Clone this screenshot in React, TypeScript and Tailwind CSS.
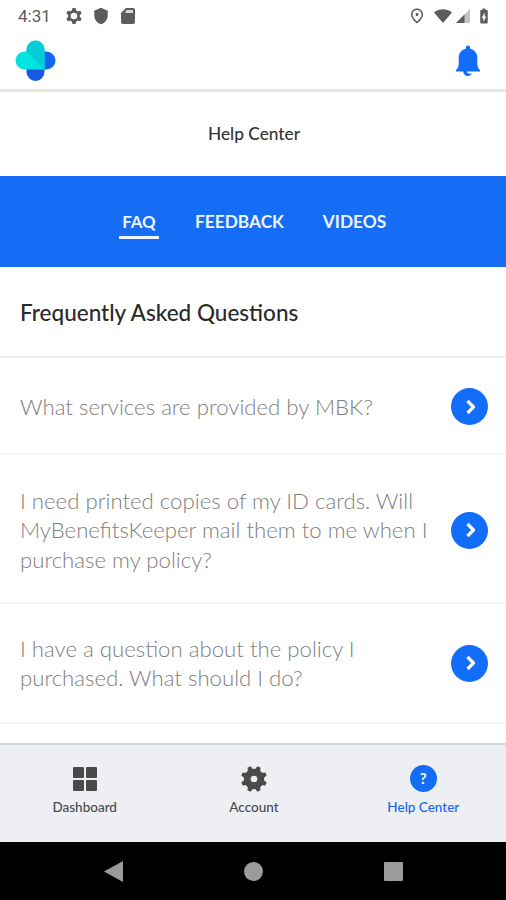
import { useState } from 'react'
import { MdBatteryChargingFull, MdOutlinePlace, MdShield } from 'react-icons/md'

interface Question {
  id: string
  lines: string[]
  rowClass: string
}

const questions: Question[] = [
  {
    id: 'services',
    lines: ['What services are provided by MBK?'],
    rowClass: 'h-[97px] pt-[2px]',
  },
  {
    id: 'id-cards',
    lines: [
      'I need printed copies of my ID cards. Will',
      'MyBenefitsKeeper mail them to me when I',
      'purchase my policy?',
    ],
    rowClass: 'h-[149px] pt-[3px]',
  },
  {
    id: 'policy',
    lines: ['I have a question about the policy I', 'purchased. What should I do?'],
    rowClass: 'h-[120px]',
  },
]

const tabs = [
  { id: 'faq', label: 'FAQ', width: 'w-[40px]', text: 'text-[16.8px]' },
  { id: 'feedback', label: 'FEEDBACK', width: 'w-[97px]', text: 'text-[17.3px]' },
  { id: 'videos', label: 'VIDEOS', width: 'w-[69px]', text: 'text-[17.3px]' },
]

const gearTeeth = [22.5, 67.5, 112.5, 157.5, 202.5, 247.5, 292.5, 337.5]
const settingsTeeth = [0, 60, 120, 180, 240, 300]

function SettingsIcon() {
  return (
    <svg viewBox="-9 -9 18 18" className="size-[18px]" fill="currentColor">
      <circle r="4.600" fill="none" stroke="currentColor" strokeWidth="2.600" />
      {settingsTeeth.map((angle) => (
        <path key={angle} d="M-2.400-5L-1.500-8H1.500L2.400-5z" transform={`rotate(${angle})`} />
      ))}
    </svg>
  )
}

function StatusBar() {
  return (
    <div className="flex h-8 items-center justify-between pl-[18px] pr-[13px] text-[#5c5c5c]">
      <div className="flex items-center">
        <span className="w-[47px] font-[Roboto,sans-serif] text-[17px] leading-none">4:31</span>
        <SettingsIcon />
        <MdShield className="ml-[9px] size-[18px]" />
        <svg viewBox="0 0 14 16" className="ml-[11px] h-4 w-[14px]" fill="currentColor">
          <path d="M5 0h7a2 2 0 0 1 2 2v12a2 2 0 0 1-2 2H2a2 2 0 0 1-2-2V5z" />
          <path d="M5.500 2H12v3H4z" fill="#d8d8d8" />
        </svg>
      </div>
      <div className="flex items-center">
        <MdOutlinePlace className="size-[18px]" />
        <svg viewBox="0 0 18 14" className="ml-[8px] h-[14px] w-[18px]" fill="currentColor">
          <path d="M0 3.500C5-.8 13-.8 18 3.500L9 14z" />
        </svg>
        <svg viewBox="0 0 14 14" className="ml-[4px] size-[14px]">
          <path d="M14 0v14H0z" fill="#c4c4c4" />
          <path d="M8.500 5.500V14H0z" fill="#5c5c5c" />
        </svg>
        <MdBatteryChargingFull className="ml-[5px] size-[18px]" />
      </div>
    </div>
  )
}

function Logo() {
  return (
    <svg viewBox="0 0 41 41" className="size-[41px]">
      <path d="M27 11.500h4.500a9 9 0 0 1 0 18H27z" fill="#1466ee" />
      <path d="M11.500 29h18v3a9 9 0 0 1-18 0z" fill="#1558e6" />
      <path d="M29.500 11.500V29.500H9.500a9 9 0 0 1 0-18h2V9.500a9 9 0 0 1 18 0z" fill="#00e3df" />
      <path d="M11.500 11.500V9.500a9 9 0 0 1 18 0v20z" fill="#08cbd8" />
    </svg>
  )
}

function BellIcon() {
  return (
    <svg viewBox="0 0 26 32" className="h-8 w-[26px]" fill="#126dfa">
      <path d="M13 .5c1.300 0 2.100.9 2.100 2v1.200c4.500 1 7.200 4.500 7.200 8.800v6.700c0 2.500 1.200 4.400 2.700 5.800v1.500H1V25c1.500-1.400 2.700-3.300 2.700-5.800v-6.700c0-4.300 2.700-7.800 7.200-8.800V2.500c0-1.100.8-2 2.100-2z" />
      <path d="M8.200 26h3.300c.3 2 2.300 3.200 5.300 2.600-.7 1.500-2 2.400-3.800 2.400-2.800 0-4.800-2.100-4.800-5z" />
    </svg>
  )
}

function GearIcon() {
  return (
    <svg viewBox="-13 -13 26 26" className="size-[26px]" fill="#4a4a4b">
      <circle r="10.200" />
      {gearTeeth.map((angle) => (
        <path key={angle} d="M-2.800-9L-1.700-13H1.700L2.800-9z" transform={`rotate(${angle})`} />
      ))}
      <circle r="3.300" fill="#eeeff3" />
    </svg>
  )
}

function DashboardIcon() {
  return (
    <svg viewBox="0 0 24 24" className="size-6" fill="#4a4a4b">
      <rect width="11" height="11" rx="1" />
      <rect x="13" width="11" height="11" rx="1" />
      <rect y="13" width="11" height="11" rx="1" />
      <rect x="13" y="13" width="11" height="11" rx="1" />
    </svg>
  )
}

export default function App() {
  const [activeTab, setActiveTab] = useState('faq')

  return (
    <div className="flex h-[900px] w-[506px] flex-col overflow-hidden bg-white font-[Lato,sans-serif]">
      <StatusBar />

      {/* App header */}
      <header className="flex h-[60px] shrink-0 items-center justify-between border-b-[3px] border-[#e6e6e6] pl-[15px] pr-[25px]">
        <Logo />
        <button aria-label="Notifications">
          <BellIcon />
        </button>
      </header>

      <div className="flex h-[84px] shrink-0 items-center justify-center pl-[2px]">
        <h1 className="text-[17.300px] font-medium text-[#333]">Help Center</h1>
      </div>

      {/* Tabs */}
      <nav className="flex h-[91px] shrink-0 items-center justify-center gap-[32px] bg-[#156df5] pl-[2px]">
        {tabs.map((tab) => (
          <button
            key={tab.id}
            onClick={() => setActiveTab(tab.id)}
            className={`${tab.width} ${tab.text} h-[34px] whitespace-nowrap border-b-[3px] pt-[4px] text-center font-bold text-[#eef4ff] ${
              activeTab === tab.id ? 'border-[#eef4ff]' : 'border-transparent'
            }`}
          >
            {tab.label}
          </button>
        ))}
      </nav>

      {/* Questions */}
      <main className="flex-1 overflow-hidden">
        <div className="flex h-[91px] items-center border-b-2 border-[#f0f0f0] pl-5 pt-[2px]">
          <h2 className="text-[22.500px] font-medium text-[#2a2a2a]">Frequently Asked Questions</h2>
        </div>
        {questions.map((q) => (
          <div
            key={q.id}
            className={`flex items-center justify-between border-b-2 border-[#f4f4f4] pl-5 pr-[18px] ${q.rowClass}`}
          >
            <p className="text-[22.200px] font-light leading-[29.500px] text-[#808080]">
              {q.lines.map((line) => (
                <span key={line} className="block whitespace-nowrap">
                  {line}
                </span>
              ))}
            </p>
            <button className="flex size-[37px] shrink-0 items-center justify-center rounded-full bg-[#126efa]" aria-label="Open">
              <svg viewBox="0 0 10 16" className="ml-[2px] h-4 w-[10px]" fill="none" stroke="#fff" strokeWidth="3.200" strokeLinejoin="round">
                <path d="M1.500 2L7.500 8L1.500 14" />
              </svg>
            </button>
          </div>
        ))}
      </main>

      {/* Bottom navigation */}
      <nav className="-mr-[2px] grid h-[99px] shrink-0 grid-cols-3 border-t-2 border-[#d5d8da] bg-[#eeeff3] pt-5 text-[13.500px] font-medium text-[#4a4a4b]">
        <button className="flex flex-col items-center">
          <span className="flex h-[27px] items-center"><DashboardIcon /></span>
          <span className="mt-[5px] leading-[20px]">Dashboard</span>
        </button>
        <button className="flex flex-col items-center">
          <span className="flex h-[27px] items-center"><GearIcon /></span>
          <span className="mt-[5px] leading-[20px]">Account</span>
        </button>
        <button className="flex flex-col items-center text-[#1767ee]">
          <span className="flex size-[27px] items-center justify-center rounded-full bg-[#156df5] text-[15px] font-bold text-white">?</span>
          <span className="mt-[5px] leading-[20px]">Help Center</span>
        </button>
      </nav>

      {/* System buttons */}
      <div className="flex h-[58px] shrink-0 items-center justify-center gap-[121px] bg-black">
        <svg viewBox="0 0 19 21" className="h-[21px] w-[19px]" fill="#9b9b9b">
          <path d="M19 0v21L0 10.500z" />
        </svg>
        <div className="size-[19px] rounded-full bg-[#9b9b9b]" />
        <div className="size-[19px] rounded-[1px] bg-[#9b9b9b]" />
      </div>
    </div>
  )
}
